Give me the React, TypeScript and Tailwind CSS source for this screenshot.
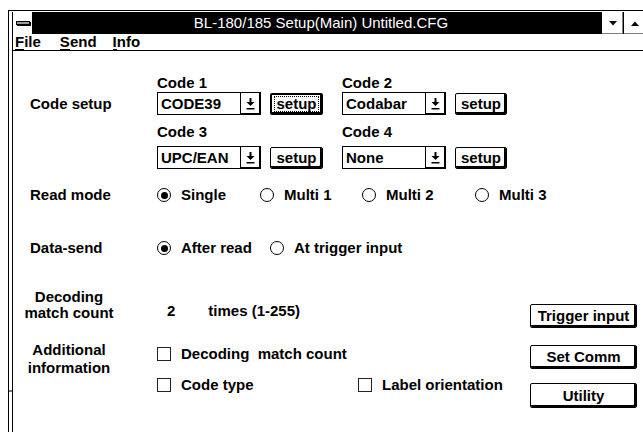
import clsx from 'clsx'
import type { ReactNode } from 'react'

function ComboArrow() {
  return (
    <svg width="9" height="12" viewBox="0 0 9 12" className="block">
      <rect x="3.5" y="0" width="2" height="4" fill="#000" />
      <polygon points="0.5,4 8.5,4 4.5,8" fill="#000" />
      <rect x="0.5" y="10" width="8" height="1.5" fill="#000" />
    </svg>
  )
}

function Combo({ value, className }: { value: string; className?: string }) {
  return (
    <div className={clsx('flex h-[23px] w-[104px] border border-black bg-white', className)}>
      <div className="flex-1 pl-[3px] leading-[21px]">{value}</div>
      <div className="flex w-[20px] items-center justify-center border-l border-black shadow-[inset_-1px_-1px_0_#000]">
        <ComboArrow />
      </div>
    </div>
  )
}

function Btn({ children, className, isDefault }: { children: ReactNode; className?: string; isDefault?: boolean }) {
  return (
    <div
      className={clsx(
        'flex items-center justify-center rounded-[2px] border-black bg-white',
        isDefault ? 'border-2 shadow-[inset_-1px_-1px_0_#000]' : 'border shadow-[inset_-2px_-2px_0_#000]',
        className
      )}
    >
      {isDefault ? <span className="px-px leading-[14px] outline-1 outline-dotted outline-black">{children}</span> : children}
    </div>
  )
}

function Radio({ on, label, className }: { on?: boolean; label: string; className?: string }) {
  return (
    <div className={clsx('flex items-center gap-[10px]', className)}>
      <span className={clsx('flex h-[14px] w-[14px] items-center justify-center rounded-full border-black', on ? 'border-[1.5px]' : 'border')}>
        {on && <span className="h-[7px] w-[7px] rounded-full bg-black" />}
      </span>
      <span>{label}</span>
    </div>
  )
}

function Check({ label, className }: { label: string; className?: string }) {
  return (
    <div className={clsx('flex items-center gap-[10px]', className)}>
      <span className="h-[14px] w-[14px] border border-[#222] bg-white" />
      <span className="whitespace-pre">{label}</span>
    </div>
  )
}

function MenuItem({ first, rest, className }: { first: string; rest: string; className?: string }) {
  return (
    <span className={clsx('flex items-start', className)}>
      <span className="border-b border-black leading-[14px]">{first}</span>
      <span className="leading-[14px]">{rest}</span>
    </span>
  )
}

export default function App() {
  return (
    <div className="relative h-[432px] w-[643px] overflow-hidden bg-white text-[15px] font-bold leading-4 text-black [font-family:'Liberation_Sans',Arial,sans-serif]">
      <div className="ml-2 mt-[10px] h-[422px] w-[637px] border-l border-t border-black pl-[3px] pt-px">
        <div className="h-full border-l border-black">
          {/* title bar */}
          <div className="flex h-[22px]">
            <div className="flex w-[20px] items-center justify-center border-r border-black bg-white">
              <span className="h-[4px] w-[14px] border border-black bg-[#9a9a9a] shadow-[1px_1px_0_#000]" />
            </div>
            <div className="flex-1 bg-black pl-[8px] text-center text-[15px] font-normal leading-[22px] text-white">
              BL-180/185 Setup(Main) Untitled.CFG
            </div>
            <div className="flex w-[22px] items-center justify-center border-l border-black bg-white shadow-[inset_-1px_-1px_0_#808080]">
              <svg width="8" height="5" viewBox="0 0 8 5"><polygon points="0,0 8,0 4,4.5" fill="#000" /></svg>
            </div>
            <div className="flex w-[22px] items-center justify-center border-l border-black bg-white shadow-[inset_-1px_-1px_0_#808080]">
              <svg width="8" height="5" viewBox="0 0 8 5"><polygon points="0,5 8,5 4,0.5" fill="#000" /></svg>
            </div>
          </div>

          {/* menu bar */}
          <div className="flex h-[17px] items-center border-b border-black pl-[2px]">
            <MenuItem first="F" rest="ile" />
            <MenuItem first="S" rest="end" className="ml-[19px]" />
            <MenuItem first="I" rest="nfo" className="ml-[16px]" />
          </div>

          {/* content */}
          <div className="pt-[24px]">
            <div className="flex h-4">
              <div className="w-[144px]" />
              <div className="w-[185px]">Code 1</div>
              <div>Code 2</div>
            </div>
            <div className="mt-px flex h-[23px] items-center">
              <div className="w-[144px] pl-[17px]">Code setup</div>
              <Combo value="CODE39" />
              <Btn isDefault className="ml-[9px] h-[22px] w-[53px]">setup</Btn>
              <Combo value="Codabar" className="ml-[19px]" />
              <Btn className="ml-[9px] h-[22px] w-[52px]">setup</Btn>
            </div>

            <div className="mt-[9px] flex h-4">
              <div className="w-[144px]" />
              <div className="w-[185px]">Code 3</div>
              <div>Code 4</div>
            </div>
            <div className="mt-[6px] flex h-[23px] items-center">
              <div className="w-[144px]" />
              <Combo value="UPC/EAN" />
              <Btn className="ml-[9px] h-[22px] w-[53px]">setup</Btn>
              <Combo value="None" className="ml-[19px]" />
              <Btn className="ml-[9px] h-[22px] w-[52px]">setup</Btn>
            </div>

            <div className="mt-[18px] flex h-4 items-center">
              <div className="w-[144px] pl-[17px]">Read mode</div>
              <Radio on label="Single" className="w-[103px]" />
              <Radio label="Multi 1" className="w-[102px]" />
              <Radio label="Multi 2" className="w-[113px]" />
              <Radio label="Multi 3" />
            </div>

            <div className="mt-[37px] flex h-4 items-center">
              <div className="w-[144px] pl-[17px]">Data-send</div>
              <Radio on label="After read" className="w-[113px]" />
              <Radio label="At trigger input" />
            </div>

            <div className="mt-[33px] flex">
              <div className="w-[517px]">
                <div className="flex items-start">
                  <div className="w-[112px] text-center">
                    Decoding
                    <br />
                    match count
                  </div>
                  <span className="ml-[42px] mt-[14px]">2</span>
                  <span className="ml-[33px] mt-[14px]">times (1-255)</span>
                </div>

                <div className="mt-[20px] flex items-start">
                  <div className="w-[112px] text-center leading-[18px]">
                    Additional
                    <br />
                    information
                  </div>
                  <div className="ml-[32px] pt-[5px]">
                    <Check label="Decoding  match count" className="h-4" />
                    <div className="mt-[15px] flex h-4">
                      <Check label="Code type" className="w-[201px]" />
                      <Check label="Label orientation" />
                    </div>
                  </div>
                </div>
              </div>

              <div className="flex w-[107px] flex-col">
                <Btn className="mt-[15px] h-[24px]">Trigger input</Btn>
                <Btn className="mt-[17px] h-[24px]">Set Comm</Btn>
                <Btn className="mt-[14px] h-[25px]">Utility</Btn>
              </div>
            </div>
          </div>
        </div>
      </div>
      {/* resize border notch */}
      <div className="absolute left-[9px] top-[390px] h-[2px] w-[3px] bg-[#777]" />
    </div>
  )
}
